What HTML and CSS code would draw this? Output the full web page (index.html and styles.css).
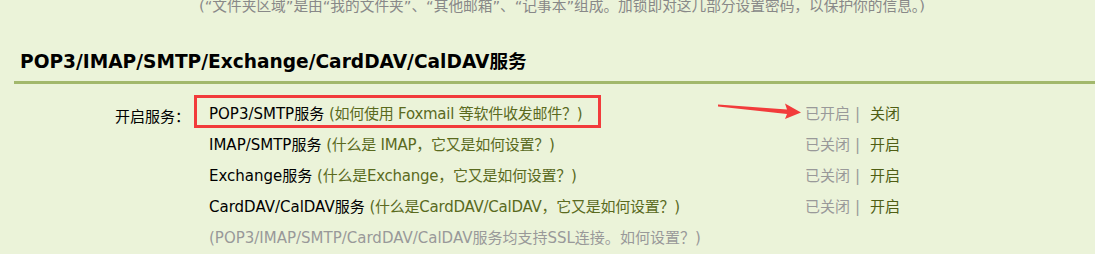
FILE: index.html
```html
<!DOCTYPE html>
<html lang="zh-CN">
<head>
<meta charset="utf-8">
<title>POP3/IMAP/SMTP 设置</title>
<link rel="stylesheet" href="styles.css">
</head>
<body>
<div class="page">
  <p class="note">(“文件夹区域”是由“我的文件夹”、“其他邮箱”、“记事本”组成。加锁即对这几部分设置密码，以保护你的信息。)</p>

  <section class="section">
    <h2 class="sec-title">POP3/IMAP/SMTP/Exchange/CardDAV/CalDAV服务</h2>
    <div class="form-row">
      <div class="label">开启服务：</div>
      <ul class="services">
        <li class="svc">
          <div class="desc"><span class="name">POP3/SMTP服务</span> <a class="help" href="#">(如何使用 Foxmail 等软件收发邮件？)</a></div>
          <div class="status"><span class="state">已开启</span><span class="sep">|</span><a class="act" href="#">关闭</a></div>
          <span class="mark-box"></span>
          <svg class="mark-arrow" width="84" height="17" viewBox="0 0 84 17"><polygon points="0,1.5 69,6.5 67,0.5 83,9.5 67,16 69,11 0,3.5" fill="#f23b3b"/></svg>
        </li>
        <li class="svc">
          <div class="desc"><span class="name">IMAP/SMTP服务</span> <a class="help" href="#">(什么是 IMAP，它又是如何设置？)</a></div>
          <div class="status"><span class="state">已关闭</span><span class="sep">|</span><a class="act" href="#">开启</a></div>
        </li>
        <li class="svc">
          <div class="desc"><span class="name">Exchange服务</span> <a class="help" href="#">(什么是Exchange，它又是如何设置？)</a></div>
          <div class="status"><span class="state">已关闭</span><span class="sep">|</span><a class="act" href="#">开启</a></div>
        </li>
        <li class="svc">
          <div class="desc"><span class="name">CardDAV/CalDAV服务</span> <a class="help" href="#">(什么是CardDAV/CalDAV，它又是如何设置？)</a></div>
          <div class="status"><span class="state">已关闭</span><span class="sep">|</span><a class="act" href="#">开启</a></div>
        </li>
        <li class="hint">(POP3/IMAP/SMTP/CardDAV/CalDAV服务均支持SSL连接。<a class="hint-link" href="#">如何设置？</a>)</li>
      </ul>
    </div>
  </section>
</div>
</body>
</html>
```

FILE: styles.css
```css
html, body {
  margin: 0;
  padding: 0;
  background: #ebf3d9;
}
body {
  font-family: "DejaVu Sans", Verdana, "Noto Sans CJK SC", sans-serif;
  font-size: 15px;
  color: #000;
  overflow: hidden;
}
.page {
  width: 1095px;
  height: 254px;
}
.note {
  margin: 0;
  padding-left: 199px;
  height: 12px;
  line-height: 12px;
  color: #888;
  font-size: 14.7px;
  white-space: nowrap;
}
.section {
  margin-top: 38px;
}
.sec-title {
  margin: 0 0 0 14px;
  padding: 0 0 7px 6px;
  font-size: 18.6px;
  font-weight: bold;
  line-height: 24px;
  border-bottom: 3px solid #a2b86c;
  color: #000;
  white-space: nowrap;
}
.form-row {
  display: flex;
  margin-top: 15px;
}
.label {
  width: 190px;
  text-align: right;
  line-height: 31px;
  margin-top: 3px;
  flex: none;
}
.services {
  list-style: none;
  margin: 0;
  padding: 0 0 0 19px;
}
.svc {
  position: relative;
  display: flex;
  height: 31px;
  line-height: 31px;
  white-space: nowrap;
}
.desc {
  width: 596px;
  flex: none;
}
.name {
  color: #000;
}
.help, .act, .hint-link {
  color: #5a6a1e;
  text-decoration: none;
}
.help {
  letter-spacing: -0.25px;
}
.status {
  display: flex;
  color: #999;
}
.sep {
  margin: 0 10px 0 5px;
}
.act {
  color: #4f5e14;
}
.hint {
  line-height: 31px;
  color: #999;
  white-space: nowrap;
}
.hint-link {
  color: #999;
}
.mark-box {
  position: absolute;
  left: -15px;
  top: -4px;
  width: 401px;
  height: 27px;
  border: 3px solid #f23b3b;
  pointer-events: none;
}
.mark-arrow {
  position: absolute;
  left: 509px;
  top: 4px;
}
```
